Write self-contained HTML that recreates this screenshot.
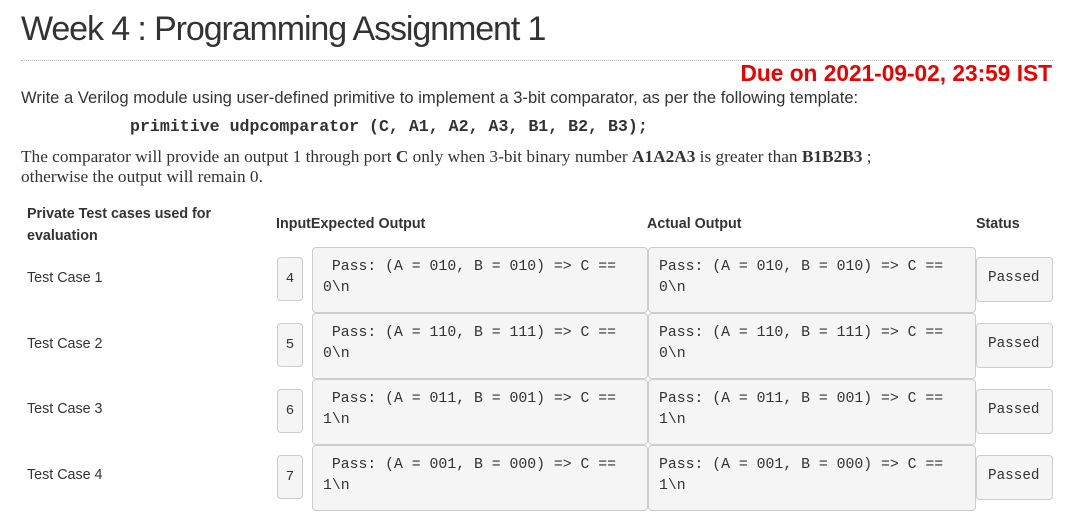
<!DOCTYPE html>
<html><head><style>
body{margin:0;width:1073px;height:526px;background:#fff;position:relative;overflow:hidden;font-family:"Liberation Sans",sans-serif;color:#333}
.a{position:absolute;white-space:nowrap}
.box{position:absolute;background:#f5f5f5;border:1px solid #ccc;border-radius:4px;box-sizing:border-box;font-family:"Liberation Mono",monospace;font-size:14.8px;color:#333;line-height:21px;white-space:pre}
.n{text-align:center;padding:11px 0 0 0 !important;font-size:14px}
.h{font-weight:bold;font-size:14.3px;color:#333}
.tc{font-size:14.3px;color:#333}
</style></head><body>
<div class="a" style="left:21px;top:10px;font-size:34px;letter-spacing:-1.1px;color:#333">Week 4 : Programming Assignment 1</div>
<div class="a" style="left:21px;top:60px;width:1032px;border-top:1px dotted #bbb"></div>
<div class="a" style="right:21px;top:60px;font-size:22.7px;font-weight:bold;color:#e00">Due on 2021-09-02, 23:59 IST</div>
<div class="a" style="left:21px;top:88px;font-size:16.6px">Write a Verilog module using user-defined primitive to implement a 3-bit comparator, as per the following template:</div>
<div class="a" style="left:130px;top:117px;font-size:16.6px;font-weight:bold;font-family:'Liberation Mono',monospace">primitive udpcomparator (C, A1, A2, A3, B1, B2, B3);</div>
<div class="a" style="left:21px;top:147px;font-size:17.3px;font-family:'Liberation Serif',serif">The comparator will provide an output 1 through port <b>C</b> only when 3-bit binary number <b>A1A2A3</b> is greater than <b>B1B2B3</b> ;</div>
<div class="a" style="left:21px;top:167px;font-size:17.3px;font-family:'Liberation Serif',serif">otherwise the output will remain 0.</div>
<div class="a h" style="left:27px;top:203px;line-height:22px">Private Test cases used for<br>evaluation</div>
<div class="a h" style="left:276px;top:216px">InputExpected Output</div>
<div class="a h" style="left:647px;top:216px">Actual Output</div>
<div class="a h" style="left:976px;top:216px">Status</div>

<div class="a tc" style="left:27px;top:270px">Test Case 1</div>
<div class="box n" style="left:277px;top:257px;width:26px;height:44px">4</div>
<div class="box" style="left:312px;top:247px;width:336px;height:66px;padding:9px 10px"> Pass: (A = 010, B = 010) =&gt; C ==
0\n</div>
<div class="box" style="left:648px;top:247px;width:328px;height:66px;padding:9px 10px">Pass: (A = 010, B = 010) =&gt; C ==
0\n</div>
<div class="box" style="left:976px;top:257px;width:77px;height:45px;padding:10px 0 0 11px;font-size:14.3px">Passed</div>

<div class="a tc" style="left:27px;top:336px">Test Case 2</div>
<div class="box n" style="left:277px;top:323px;width:26px;height:44px">5</div>
<div class="box" style="left:312px;top:313px;width:336px;height:66px;padding:9px 10px"> Pass: (A = 110, B = 111) =&gt; C ==
0\n</div>
<div class="box" style="left:648px;top:313px;width:328px;height:66px;padding:9px 10px">Pass: (A = 110, B = 111) =&gt; C ==
0\n</div>
<div class="box" style="left:976px;top:323px;width:77px;height:45px;padding:10px 0 0 11px;font-size:14.3px">Passed</div>

<div class="a tc" style="left:27px;top:401px">Test Case 3</div>
<div class="box n" style="left:277px;top:389px;width:26px;height:44px">6</div>
<div class="box" style="left:312px;top:379px;width:336px;height:66px;padding:9px 10px"> Pass: (A = 011, B = 001) =&gt; C ==
1\n</div>
<div class="box" style="left:648px;top:379px;width:328px;height:66px;padding:9px 10px">Pass: (A = 011, B = 001) =&gt; C ==
1\n</div>
<div class="box" style="left:976px;top:389px;width:77px;height:45px;padding:10px 0 0 11px;font-size:14.3px">Passed</div>

<div class="a tc" style="left:27px;top:467px">Test Case 4</div>
<div class="box n" style="left:277px;top:455px;width:26px;height:44px">7</div>
<div class="box" style="left:312px;top:445px;width:336px;height:66px;padding:9px 10px"> Pass: (A = 001, B = 000) =&gt; C ==
1\n</div>
<div class="box" style="left:648px;top:445px;width:328px;height:66px;padding:9px 10px">Pass: (A = 001, B = 000) =&gt; C ==
1\n</div>
<div class="box" style="left:976px;top:455px;width:77px;height:45px;padding:10px 0 0 11px;font-size:14.3px">Passed</div>
</body></html>
